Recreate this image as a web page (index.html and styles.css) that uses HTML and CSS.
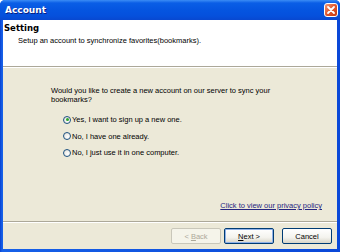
FILE: index.html
```html
<!DOCTYPE html>
<html>
<head>
<meta charset="utf-8">
<link rel="stylesheet" href="styles.css">
</head>
<body>
<div class="window">
  <div class="titlebar">
    <span class="title">Account</span>
    <span class="close"><svg width="14" height="14" viewBox="0 0 14 14"><path d="M4 4 L10 10 M10 4 L4 10" stroke="#fff" stroke-width="1.8" stroke-linecap="round"/></svg></span>
  </div>
  <div class="frame">
    <div class="header">
      <div class="h-title">Setting</div>
      <div class="h-sub">Setup an account to synchronize favorites(bookmarks).</div>
    </div>
    <div class="content">
      <p class="question">Would you like to create a new account on our server to sync your bookmarks?</p>
      <div class="options">
        <label class="opt"><span class="radio checked"></span>Yes, I want to sign up a new one.</label>
        <label class="opt"><span class="radio"></span>No, I have one already.</label>
        <label class="opt"><span class="radio"></span>No, I just use it in one computer.</label>
      </div>
      <div class="linkrow"><a class="link" href="#">Click to view our privacy policy</a></div>
    </div>
    <div class="footer">
      <button class="btn disabled">&lt; <u>B</u>ack</button>
      <button class="btn default"><u>N</u>ext &gt;</button>
      <button class="btn cancel">Cancel</button>
    </div>
  </div>
</div>
</body>
</html>
```
FILE: styles.css
```css
* { box-sizing: border-box; }
html, body { margin: 0; padding: 0; }
body {
  width: 340px; height: 252px; overflow: hidden;
  font-family: "Liberation Sans", Arial, sans-serif;
  font-size: 7.5px;
  color: #000;
}
.window {
  width: 340px; height: 252px;
  display: flex; flex-direction: column;
  background: linear-gradient(to right, #0840d0 0, #1660e8 2px, #0a48d8 100%);
  border-radius: 5px 5px 0 0;
}
.titlebar {
  height: 20px;
  display: flex; align-items: center; justify-content: space-between;
  padding: 0 5px 0 5px;
  background: linear-gradient(to bottom, #3b8cf5 0, #0a5ee6 3px, #0555e0 10px, #0550dc 16px, #0848d0 20px);
  border-radius: 5px 5px 0 0;
}
.title {
  color: #fff; font-weight: bold; font-size: 9px;
  font-family: "DejaVu Sans", "Liberation Sans", sans-serif;
  text-shadow: 1px 1px 0 #0a1e80;
}
.close {
  width: 14px; height: 14px;
  display: flex;
  border: 1px solid #fff;
  border-radius: 3px;
  background: linear-gradient(to bottom right, #f29a7a, #e0552a 50%, #c53a14);
  margin-right: -3px;
}
.close svg { display: block; margin: -1px; }
.frame {
  flex: 1;
  margin: 0 3px 3px 3px;
  background: #ece9d8;
  display: flex; flex-direction: column;
}
.header {
  height: 47px;
  background: #fff;
  border-bottom: 1px solid #aca899;
  box-shadow: 0 1px 0 #fff;
  padding: 3px 1px 0;
}
.h-title {
  font-weight: bold; font-size: 8.5px;
  font-family: "DejaVu Sans", "Liberation Sans", sans-serif;
  line-height: 10px;
}
.h-sub {
  margin-top: 3px;
  padding-left: 14px;
  line-height: 10px;
}
.content {
  flex: 1;
  padding: 19px 15px 0 48px;
  display: flex; flex-direction: column;
}
.question {
  margin: 0;
  width: 230px;
  line-height: 9px;
}
.options {
  margin-top: 11px;
  padding-left: 12px;
  display: flex; flex-direction: column;
  gap: 7.5px;
}
.opt {
  display: flex; align-items: center;
  line-height: 9px;
}
.radio {
  width: 8px; height: 8px;
  border-radius: 50%;
  border: 1px solid #1d5281;
  background: radial-gradient(circle at 65% 65%, #fff 0, #ecebe6 60%, #d0cec4 100%);
  margin-right: 1px;
  position: relative;
}
.radio.checked::after {
  content: "";
  position: absolute;
  left: 1.5px; top: 1.5px;
  width: 3px; height: 3px;
  border-radius: 50%;
  background: #2aa72a;
}
.linkrow {
  margin-top: auto;
  margin-bottom: 11px;
  display: flex; justify-content: flex-end;
}
.link {
  color: #262680;
  text-decoration: underline;
  line-height: 9px;
}
.footer {
  height: 28px;
  border-top: 1px solid #aca899;
  box-shadow: inset 0 1px 0 #fff;
  display: flex; align-items: flex-start; justify-content: flex-end;
  padding: 6px 5px 0 0;
}
.btn {
  width: 50px; height: 16px;
  font-family: "Liberation Sans", Arial, sans-serif;
  font-size: 7.5px;
  padding: 0;
  border: 1px solid #003c74;
  border-radius: 2px;
  background: linear-gradient(to bottom, #fff 0, #f4f3ee 60%, #d8d5c8 100%);
  color: #000;
  margin-left: 3px;
}
.btn u { text-decoration: underline; }
.btn.disabled {
  color: #aca899;
  border-color: #c9c7ba;
  background: #f5f4ea;
}
.btn.default {
  box-shadow: inset 0 0 0 1px #8fb1e8;
}
.btn.cancel { margin-left: 8px; }
```
